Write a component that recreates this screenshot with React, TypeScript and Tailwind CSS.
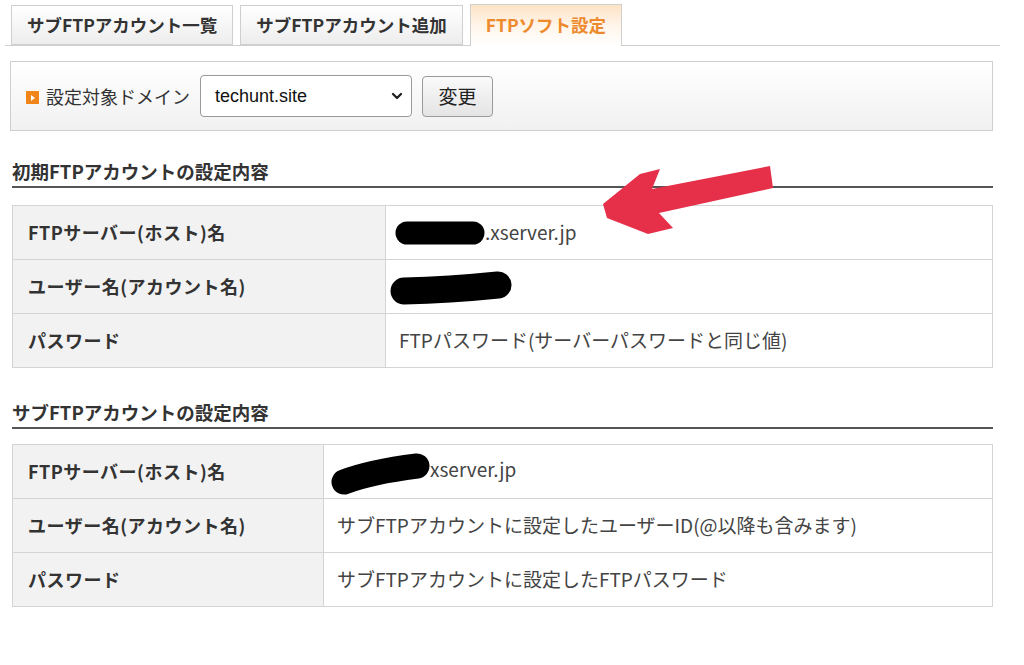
import { ChevronDown } from "lucide-react";

const jp = { fontFamily: '"Noto Sans CJK JP", "Noto Sans", sans-serif' };

function Tab({ label, active = false }: { label: string; active?: boolean }) {
  return (
    <div
      className={
        active
          ? "h-[42px] px-[15px] flex items-center border border-b-0 border-[#cfcfcf] bg-gradient-to-b from-[#fde3c6] via-[#fff5ea] to-white text-[#ee8a2e] font-bold text-[17.5px] -mb-px relative"
          : "h-[40px] px-[15px] flex items-center border border-[#cfcfcf] bg-gradient-to-b from-white to-[#ededed] text-[#333] font-bold text-[17.5px]"
      }
    >
      {label}
    </div>
  );
}

function Blob({ w, h, d, sw }: { w: number; h: number; d: string; sw: number }) {
  return (
    <svg width={w} height={h} viewBox={`0 0 ${w} ${h}`} className="inline-block align-middle shrink-0">
      <path d={d} stroke="#000" strokeWidth={sw} strokeLinecap="round" fill="none" />
    </svg>
  );
}

function Heading({ title }: { title: string }) {
  return (
    <div className="mx-[12px] w-[981px] border-b-2 border-[#555] pb-[2px]">
      <h2 className="text-[18.5px] font-bold text-[#333] leading-[25px]">{title}</h2>
    </div>
  );
}

type Row = { label: string; value: React.ReactNode };

function InfoTable({ rows, labelW }: { rows: Row[]; labelW: number }) {
  return (
    <table className="mx-[12px] w-[981px] border-collapse border border-[#d4d4d4]">
      <tbody>
        {rows.map((r) => (
          <tr key={r.label} className="h-[54px]">
            <th
              className="bg-[#f2f2f2] border border-[#d4d4d4] text-left pl-[15px] font-bold text-[18px] tracking-[0.5px] text-[#333]"
              style={{ width: labelW }}
            >
              {r.label}
            </th>
            <td className="bg-white border border-[#d4d4d4] pl-[13px] text-[19px] text-[#444]">
              {r.value}
            </td>
          </tr>
        ))}
      </tbody>
    </table>
  );
}

export default function App() {
  const first: Row[] = [
    {
      label: "FTPサーバー(ホスト)名",
      value: (
        <span className="flex items-center -ml-[6px]">
          <Blob w={92} h={28} d="M14 14 L80 14" sw={23} />
          <span>.xserver.jp</span>
        </span>
      ),
    },
    {
      label: "ユーザー名(アカウント名)",
      value: (
        <span className="flex items-center -ml-[10px]">
          <Blob w={124} h={36} d="M15 22 Q60 21 109 16" sw={27} />
        </span>
      ),
    },
    { label: "パスワード", value: "FTPパスワード(サーバーパスワードと同じ値)" },
  ];

  const sub: Row[] = [
    {
      label: "FTPサーバー(ホスト)名",
      value: (
        <span className="flex items-center -ml-[7px] mt-[4px]">
          <Blob w={100} h={42} d="M14 29 Q40 19 87 13" sw={25} />
          <span className="-mt-[8px]">xserver.jp</span>
        </span>
      ),
    },
    { label: "ユーザー名(アカウント名)", value: "サブFTPアカウントに設定したユーザーID(@以降も含みます)" },
    { label: "パスワード", value: "サブFTPアカウントに設定したFTPパスワード" },
  ];

  return (
    <div className="relative w-[1024px] h-[665px] bg-white overflow-hidden" style={jp}>
      {/* Tabs */}
      <div className="pt-[4px] mx-[5px] w-[995px] border-b border-[#cfcfcf] flex items-end gap-[7px] pl-[6px]">
        <Tab label="サブFTPアカウント一覧" />
        <Tab label="サブFTPアカウント追加" />
        <Tab label="FTPソフト設定" active />
      </div>

      {/* Domain selector */}
      <div className="mt-[15px] mx-[10px] w-[983px] h-[70px] border border-[#cfcfcf] bg-gradient-to-b from-white to-[#f1f1f1] flex items-center pl-[15px]">
        <span className="w-[13px] h-[13px] bg-[#f08519] flex items-center justify-center mr-[7px] mt-[3px]">
          <span className="block w-0 h-0 border-y-[3px] border-y-transparent border-l-[4px] border-l-white" />
        </span>
        <span className="text-[18px] text-[#333]">設定対象ドメイン</span>
        <div
          className="ml-[10px] w-[212px] h-[42px] rounded-[4px] border border-[#999] bg-white flex items-center justify-between pl-[14px] pr-[6px] text-[18px] text-[#111]"
          style={{ fontFamily: '"Liberation Sans", Arial, sans-serif' }}
        >
          <span>techunt.site</span>
          <ChevronDown size={16} strokeWidth={3.5} color="#222" />
        </div>
        <div className="ml-[10px] w-[71px] h-[41px] rounded-[4px] border border-[#9a9a9a] bg-gradient-to-b from-[#fafafa] to-[#e4e4e4] flex items-center justify-center text-[19px] text-[#222]">
          変更
        </div>
      </div>

      {/* Initial FTP account */}
      <div className="mt-[28px]">
        <Heading title="初期FTPアカウントの設定内容" />
      </div>
      <div className="mt-[17px]">
        <InfoTable rows={first} labelW={373} />
      </div>

      {/* Sub FTP account */}
      <div className="mt-[32px]">
        <Heading title="サブFTPアカウントの設定内容" />
      </div>
      <div className="mt-[15px]">
        <InfoTable rows={sub} labelW={311} />
      </div>

      {/* Red annotation arrow */}
      <svg className="absolute left-0 top-0 pointer-events-none" width="1024" height="665">
        <polygon
          points="770,166 773,188 659,213 673,228 648,234 607,218 603,204 640,174 660,169 652,189"
          fill="#e6304a"
        />
      </svg>
    </div>
  );
}
